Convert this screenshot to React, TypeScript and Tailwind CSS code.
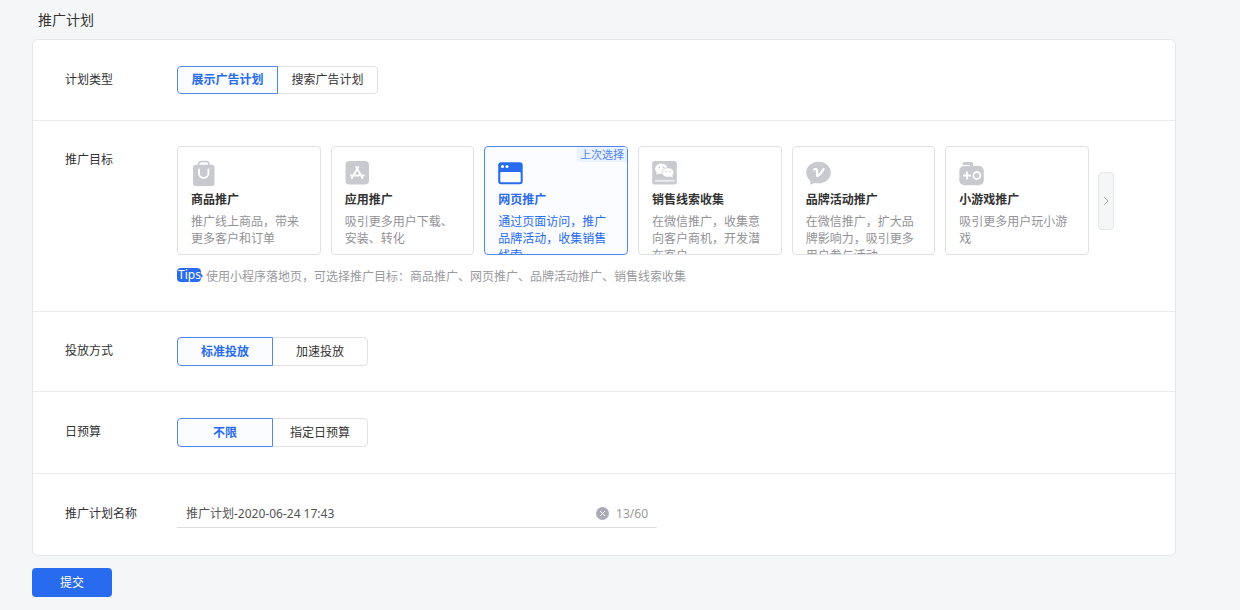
import { useState, type ReactNode } from "react";
import clsx from "clsx";

const BagIcon = () => (
  <svg className="h-[26px] w-[25px]" viewBox="0 0 25 26" fill="none">
    <path d="M7.500 5.500V4.500a3 3 0 0 1 3-3h4.500a3 3 0 0 1 3 3v1" stroke="currentColor" strokeWidth="1.500" />
    <rect x="2" y="4.800" width="21.500" height="21.200" rx="2.500" fill="currentColor" />
    <path d="M8 9.500v3.700a4.700 4.700 0 0 0 9.400 0V9.500" stroke="#fff" strokeWidth="1.900" strokeLinecap="round" />
  </svg>
);

const AppStoreIcon = () => (
  <svg className="h-[26px] w-[25px]" viewBox="0 0 25 26" fill="none">
    <rect x="0.500" y="1" width="23.500" height="23.500" rx="4" fill="currentColor" />
    <g stroke="#fff" strokeWidth="1.900" strokeLinecap="round">
      <path d="M13.300 7 8 16M11.200 7l6.300 11M6 15.500h8M17 15.500h1.800M6.800 18l.3-.5" />
    </g>
  </svg>
);

const BrowserIcon = () => (
  <svg className="h-[26px] w-[25px]" viewBox="0 0 25 26" fill="none">
    <rect x="0.200" y="2.300" width="24.500" height="22" rx="3" fill="currentColor" />
    <rect x="2.300" y="12" width="20.400" height="10.200" rx="1" fill="#fafcff" />
    <circle cx="4.500" cy="6.600" r="1.500" fill="#fff" />
    <circle cx="9" cy="6.600" r="1.500" fill="#fff" />
  </svg>
);

const WechatIcon = () => (
  <svg className="h-[26px] w-[25px]" viewBox="0 0 25 26" fill="none">
    <rect x="0.200" y="1" width="24.600" height="23.500" rx="2.500" fill="currentColor" />
    <g fill="#fff">
      <ellipse cx="9.300" cy="8.800" rx="6.200" ry="5.200" />
      <path d="m5 11-.8 3.800L8 13z" />
      <ellipse cx="15.800" cy="12.500" rx="6" ry="4.800" stroke="currentColor" strokeWidth="0.800" />
      <path d="m18 16.300 2.800 1.500-.6-3z" />
      <rect x="3" y="19.800" width="19.500" height="2" opacity="0.600" />
    </g>
    <g fill="currentColor">
      <circle cx="7.300" cy="7.400" r="0.800" />
      <circle cx="11.500" cy="7.400" r="0.800" />
      <circle cx="13.800" cy="11.500" r="0.700" />
      <circle cx="17.800" cy="11.500" r="0.700" />
    </g>
  </svg>
);

const BrandIcon = () => (
  <svg className="h-[26px] w-[25px]" viewBox="0 0 25 26" fill="none">
    <ellipse cx="12.500" cy="12.500" rx="12.300" ry="10.800" fill="currentColor" />
    <path d="M4.500 18 4.300 24.700l6.700-2.700z" fill="currentColor" />
    <path
      d="M8.200 9.400c1.500-.8 2.500-.3 2.600 1l.5 5.800c3.500-1.800 4.800-4.500 6.300-7.200"
      stroke="#fff"
      strokeWidth="2.200"
      strokeLinecap="round"
      strokeLinejoin="round"
    />
  </svg>
);

const GameIcon = () => (
  <svg className="h-[26px] w-[25px]" viewBox="0 0 25 26" fill="none">
    <path d="M5 3.500h7.500V8" stroke="currentColor" strokeWidth="3" strokeLinecap="round" strokeLinejoin="round" />
    <rect x="0.300" y="6" width="24.500" height="19.300" rx="5" fill="currentColor" />
    <path d="M4 15.500h8M8 11.500v8" stroke="#fff" strokeWidth="1.800" />
    <circle cx="17.800" cy="15.500" r="3.500" stroke="#fff" strokeWidth="1.800" />
  </svg>
);

const goals = [
  { id: "product", title: "商品推广", desc: "推广线上商品，带来更多客户和订单", icon: BagIcon },
  { id: "app", title: "应用推广", desc: "吸引更多用户下载、安装、转化", icon: AppStoreIcon },
  { id: "web", title: "网页推广", desc: "通过页面访问，推广品牌活动，收集销售线索", icon: BrowserIcon, last: true },
  { id: "leads", title: "销售线索收集", desc: "在微信推广，收集意向客户商机，开发潜在客户", icon: WechatIcon },
  { id: "brand", title: "品牌活动推广", desc: "在微信推广，扩大品牌影响力，吸引更多用户参与活动", icon: BrandIcon },
  { id: "game", title: "小游戏推广", desc: "吸引更多用户玩小游戏", icon: GameIcon },
];

function Row({
  label,
  htmlFor,
  className = "py-[26px]",
  children,
}: {
  label: string;
  htmlFor?: string;
  className?: string;
  children: ReactNode;
}) {
  return (
    <section className={clsx("flex items-start border-b border-[#ebecf0] px-8 last:border-b-0", className)}>
      <label htmlFor={htmlFor} className="w-28 shrink-0 leading-7">
        {label}
      </label>
      {children}
    </section>
  );
}

function Segmented({ options, wide }: { options: string[]; wide?: boolean }) {
  const [active, setActive] = useState(options[0]);
  return (
    <div className="flex">
      {options.map((option) => (
        <button
          key={option}
          type="button"
          aria-pressed={option === active}
          onClick={() => setActive(option)}
          className={clsx(
            "border first:rounded-l last:-ml-px last:rounded-r",
            wide ? "h-[29px] w-24" : "h-7 w-[101px]",
            option === active
              ? "z-10 border-[#5086f0] bg-[#fafcff] font-bold text-[#296bef]"
              : "border-[#dfe1e8] bg-white"
          )}
        >
          {option}
        </button>
      ))}
    </div>
  );
}

export default function App() {
  const [goal, setGoal] = useState("web");
  const [name, setName] = useState("推广计划-2020-06-24 17:43");

  return (
    <main className="min-h-screen bg-[#f5f6f8] pr-16 pb-3 pl-8 font-['Noto_Sans','Noto_Sans_CJK_SC',sans-serif] text-xs text-[#333]">
      <h1 className="px-[6px] pt-[10px] pb-[9px] text-sm">推广计划</h1>

      <form id="plan-form" className="rounded-md border border-[#e6e7ec] bg-white">
        <Row label="计划类型">
          <Segmented options={["展示广告计划", "搜索广告计划"]} />
        </Row>

        <Row label="推广目标" className="py-[25px]">
          <div className="min-w-0 flex-1 pr-[29px]">
            <div className="flex items-center gap-[9px]">
              <div className="grid flex-1 grid-cols-6 gap-[10px]">
                {goals.map(({ id, title, desc, icon: Icon, last }) => {
                  const active = id === goal;
                  return (
                    <button
                      key={id}
                      type="button"
                      aria-pressed={active}
                      onClick={() => setGoal(id)}
                      className={clsx(
                        "relative flex h-[109px] flex-col items-start overflow-hidden rounded border px-[13px] pt-[13px] text-left",
                        active ? "border-[#5086f0] bg-[#fafcff] text-[#296bef]" : "border-[#dfe1e8] bg-white"
                      )}
                    >
                      <span className={clsx("shrink-0", active ? "text-[#296bef]" : "text-[#c8cad0]")}>
                        <Icon />
                      </span>
                      <strong className="mt-1 shrink-0 leading-5">{title}</strong>
                      <span className={clsx("mt-[3px] shrink-0 leading-[17px]", !active && "text-[#929296]")}>
                        {desc}
                      </span>
                      {last && (
                        <span className="absolute top-0 right-0 rounded-bl bg-[#eaf1ff] px-[3px] text-[11px] leading-[15px] text-[#5086f0]">
                          上次选择
                        </span>
                      )}
                    </button>
                  );
                })}
              </div>
              <button
                type="button"
                aria-label="更多推广目标"
                className="flex h-[58px] w-4 items-center justify-center rounded border border-[#e6e7ec] bg-[#f5f6f8] text-[#b4b6bd]"
              >
                <svg className="h-[10px] w-[6px]" viewBox="0 0 6 10" fill="none" stroke="currentColor">
                  <path d="m1 1 4 4-4 4" />
                </svg>
              </button>
            </div>
            <p className="mt-[13px] flex items-start gap-[5px] leading-[18px] text-[#9a9a9e]">
              <span className="relative w-6 rounded-sm bg-[#296bef] pl-px leading-[14px] text-white">
                <svg className="absolute top-[5px] -right-[2px] h-[6px] w-[3px] fill-[#296bef]" viewBox="0 0 3 6">
                  <path d="M0 0l3 3-3 3z" />
                </svg>
                <span className="relative">Tips</span>
              </span>
              使用小程序落地页，可选择推广目标：商品推广、网页推广、品牌活动推广、销售线索收集
            </p>
          </div>
        </Row>

        <Row label="投放方式" className="py-[25px]">
          <Segmented options={["标准投放", "加速投放"]} wide />
        </Row>

        <Row label="日预算">
          <Segmented options={["不限", "指定日预算"]} wide />
        </Row>

        <Row label="推广计划名称" htmlFor="plan-name" className="pt-[26px] pb-[27px]">
          <div className="flex h-7 w-[480px] items-center border-b border-[#dcdde0] px-[9px] text-[#555]">
            <input
              id="plan-name"
              className="min-w-0 flex-1 outline-none"
              value={name}
              maxLength={60}
              onChange={(e) => setName(e.target.value)}
            />
            <button type="button" aria-label="清空" onClick={() => setName("")}>
              <svg className="h-[13px] w-[13px]" viewBox="0 0 13 13" fill="none">
                <circle cx="6.500" cy="6.500" r="6.500" fill="#a9acb8" />
                <path d="m4 4 5 5m0-5-5 5" stroke="#fff" />
              </svg>
            </button>
            <span className="ml-[7px] text-[#999]">13/60</span>
          </div>
        </Row>
      </form>

      <button type="submit" form="plan-form" className="mt-3 h-[29px] w-20 rounded bg-[#296bef] text-white">
        提交
      </button>
    </main>
  );
}
